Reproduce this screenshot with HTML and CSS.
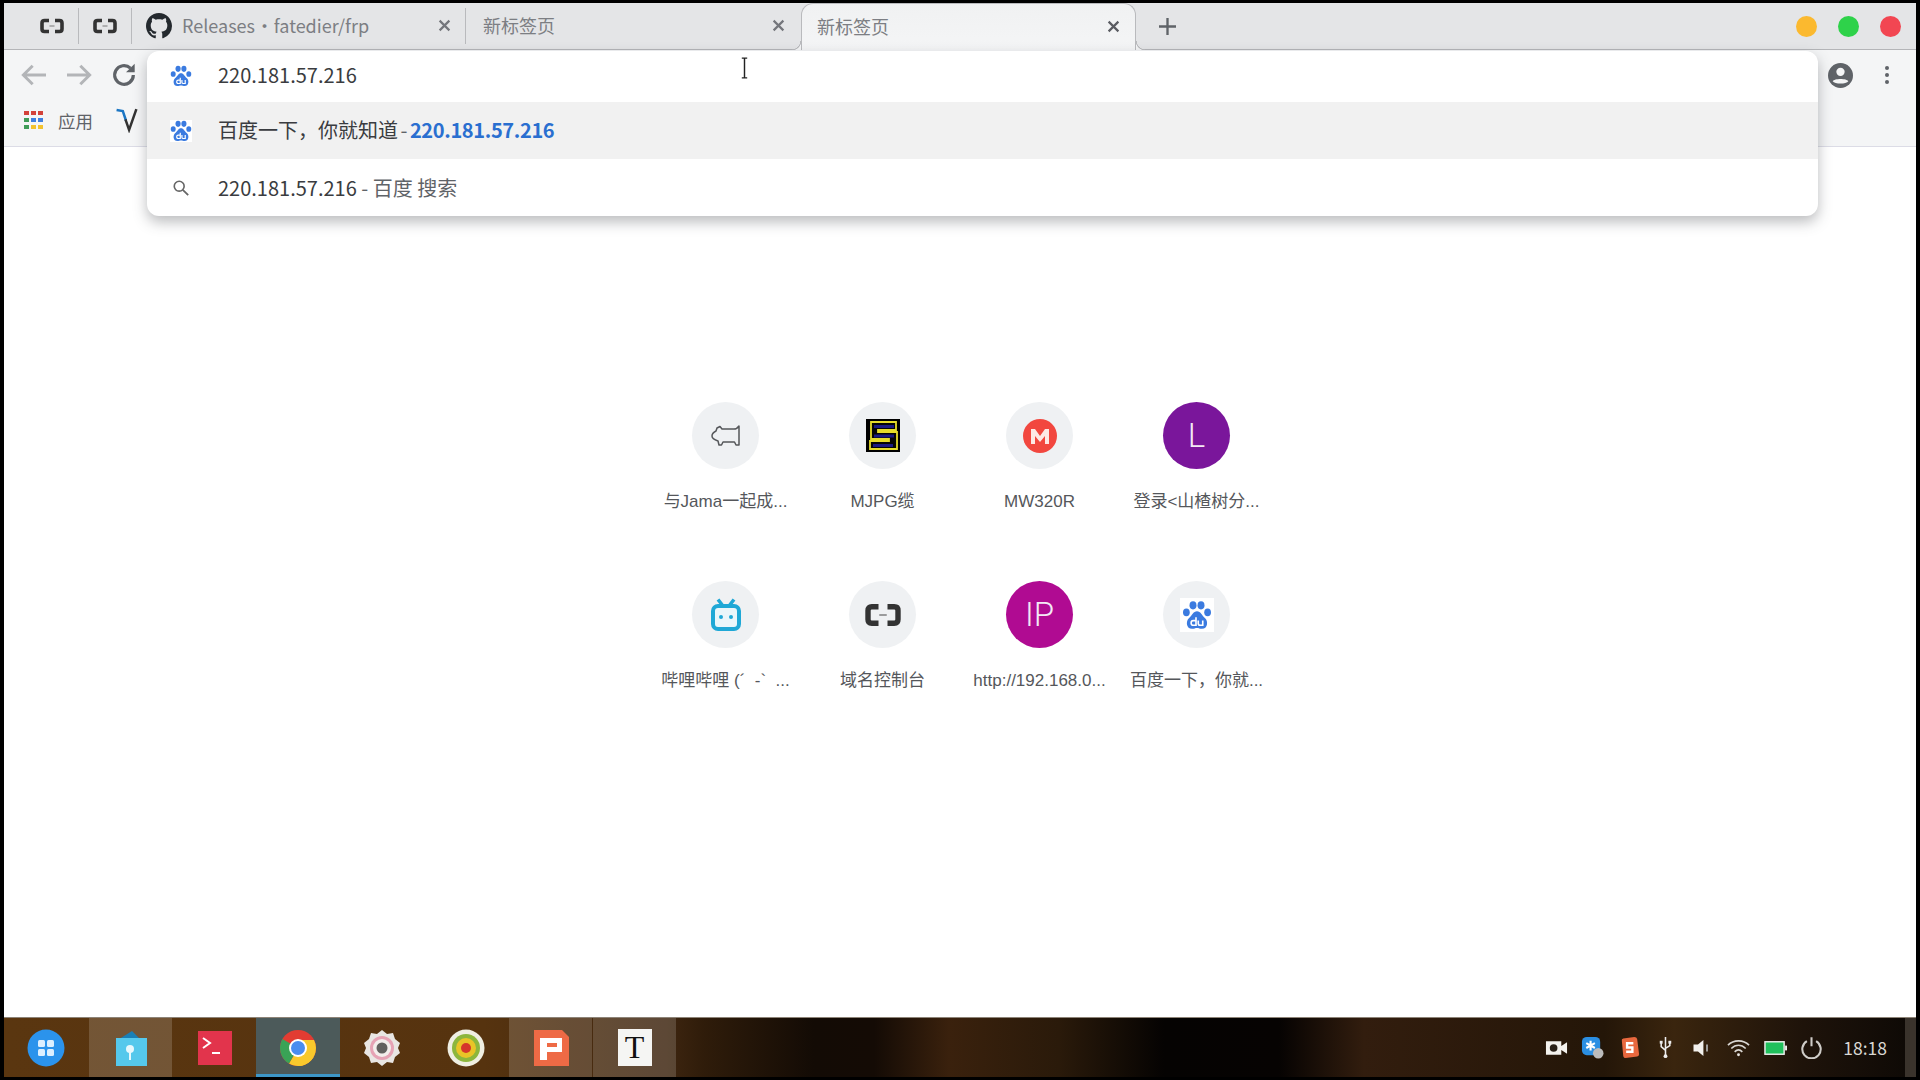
FILE: index.html
```html
<!DOCTYPE html>
<html lang="zh">
<head>
<meta charset="utf-8">
<title>新标签页</title>
<link rel="stylesheet" href="styles.css">
</head>
<body>
<svg class="defs" width="0" height="0">
  <symbol id="aliyun" viewBox="0 0 24 16">
    <path d="M9 2.500H4.500Q2 2.500 2 5V11Q2 13.500 4.500 13.500H9M15 2.500H19.500Q22 2.500 22 5V11Q22 13.500 19.500 13.500H15" fill="none" stroke="currentColor" stroke-width="3.600"/>
    <path d="M9.500 8H14.500" stroke="currentColor" stroke-width="1" opacity=".6"/>
  </symbol>
  <symbol id="baidu" viewBox="0 0 24 24">
    <ellipse cx="8.800" cy="4.200" rx="2.800" ry="3.300" fill="#3b7be0"/>
    <ellipse cx="15.200" cy="4.200" rx="2.800" ry="3.300" fill="#3b7be0"/>
    <ellipse cx="3.500" cy="9.800" rx="2.700" ry="3.100" fill="#3b7be0"/>
    <ellipse cx="20.500" cy="9.800" rx="2.700" ry="3.100" fill="#3b7be0"/>
    <path d="M12 9C9 9 8.500 12 5.500 14.500C2.800 17 3.500 23 8 23C10 23 10.500 22.400 12 22.400C13.500 22.400 14 23 16 23C20.500 23 21.200 17 18.500 14.500C15.500 12 15 9 12 9Z" fill="#3b7be0"/>
    <path d="M11.200 13.800V20.200H9Q7.300 20.200 7.300 18.300Q7.300 16.500 9 16.500H11.200M13 16.300V18.800Q13 20.200 14.500 20.200H16.600V16.300" fill="none" stroke="#fff" stroke-width="1.300"/>
  </symbol>
</svg>

<div class="screen">
  <header class="tabstrip">
    <div class="pinned"><svg class="ali-small"><use href="#aliyun"/></svg></div>
    <div class="pinned"><svg class="ali-small"><use href="#aliyun"/></svg></div>
    <div class="tab tab-gh">
      <svg class="gh" viewBox="0 0 16 16"><path fill="#24292e" d="M8 0C3.580 0 0 3.580 0 8c0 3.540 2.290 6.530 5.470 7.590.4.070.55-.17.55-.38 0-.19-.01-.82-.01-1.490-2.010.37-2.530-.49-2.690-.94-.09-.23-.48-.94-.82-1.130-.28-.15-.68-.52-.01-.53.63-.01 1.080.58 1.230.82.720 1.210 1.870.87 2.330.66.070-.52.280-.87.510-1.070-1.780-.2-3.640-.89-3.640-3.950 0-.87.310-1.590.820-2.150-.08-.2-.36-1.020.08-2.120 0 0 .67-.21 2.200.82.640-.18 1.320-.27 2-.27s1.360.09 2 .27c1.530-1.040 2.200-.82 2.200-.82.440 1.100.160 1.920.080 2.120.510.560.820 1.270.820 2.150 0 3.070-1.870 3.750-3.650 3.950.290.250.540.730.540 1.480 0 1.070-.010 1.930-.010 2.200 0 .210.150.460.550.380A8.013 8.013 0 0 0 16 8c0-4.420-3.580-8-8-8z"/></svg>
      <span class="tab-title">Releases · fatedier/frp</span>
      <svg class="tab-x" viewBox="0 0 12 12"><path d="M1.500 1.500L10.500 10.500M10.500 1.500L1.500 10.500" stroke="currentColor" stroke-width="2"/></svg>
    </div>
    <div class="tab tab-new">
      <span class="tab-title">新标签页</span>
      <svg class="tab-x" viewBox="0 0 12 12"><path d="M1.500 1.500L10.500 10.500M10.500 1.500L1.500 10.500" stroke="currentColor" stroke-width="2"/></svg>
    </div>
    <div class="tab tab-active">
      <span class="tab-title">新标签页</span>
      <svg class="tab-x" viewBox="0 0 12 12"><path d="M1.500 1.500L10.500 10.500M10.500 1.500L1.500 10.500" stroke="currentColor" stroke-width="2"/></svg>
    </div>
    <svg class="plus" viewBox="0 0 16 16"><path d="M8 0V16M0 8H16" stroke="#5f6368" stroke-width="2.200"/></svg>
    <div class="winctl">
      <span class="dot dot-y"></span>
      <span class="dot dot-g"></span>
      <span class="dot dot-r"></span>
    </div>
  </header>

  <section class="toolbar">
    <div class="navrow">
      <svg class="nav" viewBox="0 0 24 24"><path d="M21 12H4M11 5L4 12L11 19" fill="none" stroke="#b3b5b8" stroke-width="2.200"/></svg>
      <svg class="nav" viewBox="0 0 24 24"><path d="M3 12H20M13 5L20 12L13 19" fill="none" stroke="#b3b5b8" stroke-width="2.200"/></svg>
      <svg class="nav" viewBox="0 0 24 24"><path d="M19 12A7 7 0 1 1 16.800 6.900" fill="none" stroke="#5f6368" stroke-width="2.400"/><path d="M20 3.500V10H13.500Z" fill="#5f6368"/></svg>
      <div class="nav-spacer"></div>
      <svg class="avatar" viewBox="0 0 24 24"><circle cx="12" cy="12" r="12" fill="#5f6368"/><circle cx="12" cy="8.500" r="4" fill="#f4f5f6"/><path d="M4.500 17.500C6 14.500 18 14.500 19.500 17.500C17.500 20.500 6.500 20.500 4.500 17.500Z" fill="#f4f5f6"/></svg>
      <svg class="menu" viewBox="0 0 6 20"><circle cx="3" cy="3" r="2" fill="#5f6368"/><circle cx="3" cy="10" r="2" fill="#5f6368"/><circle cx="3" cy="17" r="2" fill="#5f6368"/></svg>
    </div>
    <div class="bookmarks">
      <svg class="apps" viewBox="0 0 20 20">
        <rect x="0" y="0" width="5" height="4" fill="#d3423a"/><rect x="7" y="0" width="5" height="4" fill="#d3423a"/><rect x="14" y="0" width="5" height="4" fill="#d3423a"/>
        <rect x="0" y="7" width="5" height="4" fill="#3f9c58"/><rect x="7" y="7" width="5" height="4" fill="#3f7fe0"/><rect x="14" y="7" width="5" height="4" fill="#3f7fe0"/>
        <rect x="0" y="14" width="5" height="4" fill="#3f9c58"/><rect x="7" y="14" width="5" height="4" fill="#f2c230"/><rect x="14" y="14" width="5" height="4" fill="#f2c230"/>
      </svg>
      <span class="bm-text">应用</span>
      <svg class="vlogo" viewBox="0 0 22 24"><path d="M1 2L7 3L10 12" fill="none" stroke="#1b76c4" stroke-width="2.400"/><path d="M9.500 11L13 21L20 1" fill="none" stroke="#333" stroke-width="2.400"/></svg>
    </div>
  </section>

  <main class="page">
    <div class="tiles">
      <div class="tile">
        <div class="tile-icon"><svg class="ic-pig" viewBox="0 0 32 23"><path d="M2 12C2 10 4 8 6 7L7 4L10 2.500L12 5H24Q27 5 29 2V21H26L24.500 18H13L11.500 21H9L8 17C5 16 2 14 2 12Z" fill="none" stroke="#55575a" stroke-width="1.500" stroke-linejoin="round"/></svg></div>
        <div class="tile-label">与Jama一起成...</div>
      </div>
      <div class="tile">
        <div class="tile-icon"><svg class="ic-mjpg" viewBox="0 0 34 33"><rect width="34" height="33" fill="#000"/><path d="M5 3H30V11H12V13H31V30H4V22H23V20H5Z" fill="#050505" stroke="#e6dc2a" stroke-width="1.800"/><g fill="#1a1a80"><rect x="8" y="6" width="20" height="3"/><rect x="8" y="15.500" width="20" height="3"/><rect x="7" y="25" width="20" height="3"/></g></svg></div>
        <div class="tile-label">MJPG缆</div>
      </div>
      <div class="tile">
        <div class="tile-icon"><svg class="ic-mw" viewBox="0 0 34 34"><circle cx="17" cy="17" r="17" fill="#f2473f"/><path d="M8 25V10H12L17 17L22 10H26V25H22V17L17 23L12 17V25Z" fill="#fde9e6"/></svg></div>
        <div class="tile-label">MW320R</div>
      </div>
      <div class="tile">
        <div class="tile-icon tile-letter tile-purple">L</div>
        <div class="tile-label">登录&lt;山楂树分...</div>
      </div>
      <div class="tile">
        <div class="tile-icon"><svg class="ic-bili" viewBox="0 0 32 34"><path d="M8 1.500L13 8M24 1.500L19 8" stroke="#1fa8d6" stroke-width="3.500"/><rect x="3" y="8" width="26" height="23" rx="5" fill="#eaf6fa" stroke="#1fa8d6" stroke-width="4"/><circle cx="11" cy="19" r="2" fill="#1fa8d6"/><circle cx="21" cy="19" r="2" fill="#1fa8d6"/></svg></div>
        <div class="tile-label">哔哩哔哩 (´ &nbsp;‐` &nbsp;...</div>
      </div>
      <div class="tile">
        <div class="tile-icon"><svg class="ic-ali"><use href="#aliyun"/></svg></div>
        <div class="tile-label">域名控制台</div>
      </div>
      <div class="tile">
        <div class="tile-icon tile-letter tile-magenta">IP</div>
        <div class="tile-label">http://192.168.0...</div>
      </div>
      <div class="tile">
        <div class="tile-icon"><span class="ic-baidu-bg"><svg class="ic-baidu"><use href="#baidu"/></svg></span></div>
        <div class="tile-label">百度一下，你就...</div>
      </div>
    </div>
  </main>

  <footer class="taskbar">
    <div class="slot">
      <svg class="tb-ic" viewBox="0 0 38 38"><circle cx="19" cy="19" r="18.500" fill="#2b93ec"/><g fill="#dcefff"><rect x="11" y="11" width="7" height="7" rx="1.500"/><rect x="20" y="11" width="7" height="7" rx="1.500"/><rect x="11" y="20" width="7" height="7" rx="1.500"/><rect x="20" y="20" width="7" height="7" rx="1.500"/></g></svg>
    </div>
    <div class="slot slot-hover">
      <svg class="tb-ic" viewBox="0 0 38 38"><path d="M4 12L20 2L30 12Z" fill="#1a7fb5"/><rect x="4" y="9" width="31" height="28" fill="#55c8ec"/><circle cx="18" cy="20" r="4" fill="#e7f8fd"/><path d="M18 20V31" stroke="#e7f8fd" stroke-width="2"/></svg>
    </div>
    <div class="slot">
      <svg class="tb-ic" viewBox="0 0 38 38"><rect x="3" y="2" width="34" height="34" fill="#e2344c"/><path d="M8 9L15 14L8 19" fill="none" stroke="#fff" stroke-width="2"/><path d="M17 24H25" stroke="#fff" stroke-width="2"/></svg>
    </div>
    <div class="slot slot-active">
      <svg class="tb-ic" viewBox="0 0 38 38"><circle cx="19" cy="19" r="18" fill="#e23c32"/><path d="M19 19L34.600 28A18 18 0 0 1 10 34.600Z" fill="#f9c92c"/><path d="M19 19L10 34.600A18 18 0 0 1 3.400 10Z" fill="#3aa356"/><path d="M19 19L19 37A18 18 0 0 0 37 19Q37 15 35 11H19Z" fill="#f9c92c"/><circle cx="19" cy="19" r="9" fill="#fff"/><circle cx="19" cy="19" r="7" fill="#4a8df0"/></svg>
    </div>
    <div class="slot">
      <svg class="tb-ic" viewBox="0 0 38 38"><path d="M19 1L24 5L30 4L32 10L37 14L35 19L37 24L32 28L30 34L24 33L19 37L14 33L8 34L6 28L1 24L3 19L1 14L6 10L8 4L14 5Z" fill="#e9e6e3"/><circle cx="19" cy="19" r="12" fill="#e6a3b5"/><circle cx="19" cy="19" r="9" fill="#f3eeec"/><circle cx="19" cy="19" r="5.500" fill="#62615f"/></svg>
    </div>
    <div class="slot">
      <svg class="tb-ic" viewBox="0 0 38 38"><circle cx="19" cy="19" r="18.500" fill="#efeee2"/><circle cx="19" cy="19" r="14" fill="#8cb63c"/><circle cx="19" cy="19" r="10" fill="#e9c427"/><circle cx="19" cy="19" r="5" fill="#d5372b"/></svg>
    </div>
    <div class="slot slot-hover">
      <svg class="tb-ic" viewBox="0 0 38 38"><path d="M2 1H30L37 8V37H2Z" fill="#ee6a45"/><path d="M8 9H30V23H15V31H8Z" fill="#fff"/><rect x="15" y="14" width="10" height="4" fill="#ee6a45"/></svg>
    </div>
    <div class="slot slot-hover">
      <div class="t-icon">T</div>
    </div>
    <div class="taskbar-spacer"></div>
    <div class="tray">
      <span class="tray-slot"><svg class="tray-ic" viewBox="0 0 24 16"><path d="M1 1H17V6L23 2V14L17 10V15H1Z" fill="#f4f2ee"/><circle cx="9" cy="8" r="4" fill="#2a2118"/></svg></span>
      <span class="tray-slot"><svg class="tray-ic tray-tall" viewBox="0 0 24 24"><rect x="1" y="1" width="19" height="19" rx="5" fill="#2b8fe3"/><path d="M10 5V15M5.500 7.500L14.500 12.500M14.500 7.500L5.500 12.500" stroke="#fff" stroke-width="2.200"/><circle cx="18" cy="18" r="5.500" fill="#bcbcbc"/></svg></span>
      <span class="tray-slot"><svg class="tray-ic tray-tall" viewBox="0 0 24 24"><path d="M4 5Q3.500 3 5.500 2.500L17 1Q19.500 1 20 3L22 19Q22 21 20 21.500L8 23Q6 23 5.500 21Z" fill="#e8683e"/><path d="M16 7.500H9.500V12H15V16.500H8.500" fill="none" stroke="#fff" stroke-width="2.500"/></svg></span>
      <span class="tray-slot"><svg class="tray-ic tray-tall" viewBox="0 0 14 24"><path d="M7 1V22M7 15L2.500 11V7M7 13L11.500 10V7" fill="none" stroke="#eee" stroke-width="1.600"/><circle cx="7" cy="21" r="2" fill="#eee"/><rect x="1" y="5" width="3" height="3" fill="#eee"/><rect x="10" y="5" width="3" height="3" fill="#eee"/></svg></span>
      <span class="tray-slot"><svg class="tray-ic" viewBox="0 0 24 20"><path d="M2 6H7L13 1V19L7 14H2Z" fill="#f2f0ec"/><path d="M17 6V14" stroke="#aaa" stroke-width="2"/></svg></span>
      <span class="tray-slot"><svg class="tray-ic" viewBox="0 0 24 18"><path d="M1 6C7 0 17 0 23 6M4.500 9.500C9 5 15 5 19.500 9.500M8 13C10.500 10.500 13.500 10.500 16 13" fill="none" stroke="#d9d6d2" stroke-width="1.700"/><circle cx="12" cy="16" r="1.500" fill="#e9e6e2"/></svg></span>
      <span class="tray-slot"><svg class="tray-ic" viewBox="0 0 24 15"><rect x="1" y="1" width="20" height="13" fill="#20c05c" stroke="#eee" stroke-width="1.500"/><rect x="22" y="5" width="2" height="5" fill="#eee"/></svg></span>
      <span class="tray-slot"><svg class="tray-ic tray-tall" viewBox="0 0 20 20"><path d="M6 4.500A8 8 0 1 0 14 4.500M10 1V9" fill="none" stroke="#cfccc8" stroke-width="1.800"/></svg></span>
      <span class="clock">18:18</span>
    </div>
    <div class="tray-end"></div>
  </footer>

  <div class="omnibox">
    <div class="omni-row omni-input">
      <svg class="omni-ic"><use href="#baidu"/></svg>
      <span class="omni-text">220.181.57.216</span>
    </div>
    <div class="omni-row omni-sel">
      <svg class="omni-ic omni-ic-box"><use href="#baidu"/></svg>
      <span class="omni-text omni-tight">百度一下，你就知道 <span class="omni-dim">-</span> <span class="omni-url">220.181.57.216</span></span>
    </div>
    <div class="omni-row omni-last">
      <svg class="omni-ic omni-search" viewBox="0 0 20 20"><circle cx="8" cy="8" r="5.500" fill="none" stroke="#666" stroke-width="1.800"/><path d="M12 12L18 18" stroke="#666" stroke-width="2"/></svg>
      <span class="omni-text omni-low">220.181.57.216 <span class="omni-dim">- 百度 搜索</span></span>
    </div>
  </div>

  <svg class="ibeam" viewBox="0 0 10 24"><path d="M2 1H8M5 1V23M2 23H8" fill="none" stroke="#222" stroke-width="1.600"/></svg>
</div>
</body>
</html>
```
FILE: styles.css
```css
* { box-sizing: border-box; }
html, body { margin: 0; height: 100%; background: #000; overflow: hidden; }
body { padding: 3px 4px 3px 4px; font-family: "Noto Sans CJK SC", "Noto Sans", sans-serif; }
.defs { position: absolute; }

.screen { position: relative; height: 100%; display: flex; flex-direction: column; background: #fff; }

.tabstrip { height: 47px; flex: none; display: flex; align-items: center; background: #e4e5e7; border-bottom: 1px solid #b4b5b8; position: relative; }
.pinned { width: 53px; height: 36px; display: flex; align-items: center; justify-content: center; border-right: 1px solid #b9babd; color: #333; }
.pinned:first-child { width: 75px; padding-left: 21px; }
.ali-small { width: 24px; height: 16px; }
.tab { height: 36px; display: flex; align-items: center; position: relative; font-size: 18px; color: #7c7e83; }
.tab-gh { width: 334px; padding-left: 14px; border-right: 1px solid #b9babd; }
.tab-gh .tab-title { word-spacing: -3.600px; }
.gh { width: 26px; height: 26px; margin-right: 10px; flex: none; }
.tab-title { white-space: nowrap; position: relative; top: -1px; }
.tab-x { position: absolute; right: 14px; top: 50%; width: 13px; height: 13px; margin-top: -7px; color: #74767c; }
.tab-new { width: 335px; padding-left: 17px; }
.tab-new .tab-x { right: 16px; }
.tab-active { width: 335px; height: 47px; padding-left: 15px; background: linear-gradient(#f0f1f2, #f4f5f6); border: 1px solid #b9babd; border-bottom: 0; border-radius: 12px 12px 0 0; align-self: flex-start; z-index: 1; }
.tab-active::before, .tab-active::after { content: ""; position: absolute; bottom: 0; width: 9px; height: 9px; }
.tab-active::before { left: -10px; background: radial-gradient(circle at 0 0, transparent 8px, #b9babd 8.500px, #b9babd 9px, #f4f5f6 9.500px); }
.tab-active::after { right: -10px; background: radial-gradient(circle at 100% 0, transparent 8px, #b9babd 8.500px, #b9babd 9px, #f4f5f6 9.500px); }
.tab-active .tab-x { right: 15px; color: #5a5c62; }
.plus { width: 17px; height: 17px; margin-left: 23px; flex: none; }
.winctl { margin-left: auto; display: flex; gap: 21px; padding-right: 15px; }
.dot { width: 21px; height: 21px; border-radius: 50%; }
.dot-y { background: #fbb92f; }
.dot-g { background: #2ed24a; }
.dot-r { background: #f24652; }

.toolbar { height: 97px; flex: none; background: #f4f5f6; border-bottom: 1px solid #dcdce6; display: flex; flex-direction: column; }
.navrow { height: 50px; display: flex; align-items: center; padding-left: 14px; padding-right: 26px; gap: 13px; }
.nav { width: 32px; height: 32px; flex: none; }
.nav-spacer { flex: 1; }
.avatar { width: 25px; height: 25px; flex: none; }
.menu { width: 6px; height: 20px; flex: none; margin-left: 18px; }
.bookmarks { flex: 1; display: flex; align-items: center; padding-left: 20px; padding-bottom: 5px; }
.apps { width: 20px; height: 20px; flex: none; }
.bm-text { font-size: 17.500px; color: #5f6368; margin-left: 14px; }
.vlogo { width: 24px; height: 25px; margin-left: 22px; flex: none; }

.page { flex: 1; min-height: 0; display: flex; justify-content: center; padding: 255px 0 0 2px; }
.tiles { display: grid; grid-template-columns: repeat(4, 157px); grid-auto-rows: 179px; }
.tile { display: flex; flex-direction: column; align-items: center; }
.tile-icon { width: 67px; height: 67px; flex: none; border-radius: 50%; background: #eff1f3; display: flex; align-items: center; justify-content: center; }
.tile-label { margin-top: 21px; font-family: "Liberation Sans", "Noto Sans CJK SC", sans-serif; font-size: 17px; line-height: 24px; color: #55575b; white-space: nowrap; }
.tile-letter { color: #f3e9f5; font-family: "Roboto", sans-serif; font-weight: 300; font-size: 33px; }
.tile-purple { background: #7a169b; }
.tile-magenta { background: #b00b92; }
.ic-pig { width: 32px; height: 23px; }
.ic-mjpg { width: 34px; height: 33px; }
.ic-mw { width: 34px; height: 34px; }
.ic-bili { width: 32px; height: 34px; }
.ic-ali { width: 36px; height: 24px; color: #333; }
.ic-baidu-bg { width: 34px; height: 34px; background: #fff; display: flex; align-items: center; justify-content: center; }
.ic-baidu { width: 30px; height: 30px; }

.taskbar { height: 60px; flex: none; display: flex; align-items: stretch; border-top: 1px solid #8d8377; background: linear-gradient(90deg, #5a3610 0, #56330f 480px, #3f2610 660px, #2f1c0a 700px, #130b05 810px, #140b05 870px, #3a210d 945px, #2a1a0a 1055px, #050302 1160px, #060302 1275px, #321d0e 1360px, #241608 1600px, #3a250e 1670px, #1e130a 1800px, #0f0a06 1900px); }
.slot { width: 84px; flex: none; display: flex; align-items: center; justify-content: center; }
.slot-hover { background: rgba(255,255,255,.16); margin-left: 1px; width: 83px; }
.slot-active { background: #4c5a5a; border-bottom: 3px solid #3d97c8; }
.tb-ic { width: 38px; height: 38px; }
.slot-active .tb-ic { margin-top: 3px; }
.t-icon { width: 34px; height: 37px; background: #f5f5f3; color: #111; font-family: "Liberation Serif", serif; font-size: 32px; line-height: 37px; text-align: center; }
.taskbar-spacer { flex: 1; }
.tray { display: flex; align-items: center; padding-right: 18px; }
.tray-slot { width: 36.500px; display: flex; justify-content: center; align-items: center; }
.tray-ic { width: 23px; height: 18px; }
.tray-tall { height: 23px; }
.clock { margin-left: 13.500px; font-size: 17.500px; color: #d9d7d3; }
.tray-end { width: 11px; background: #3a332c; flex: none; }

.omnibox { position: absolute; left: 143px; top: 48px; width: 1671px; height: 165px; background: #fff; border-radius: 12px; box-shadow: 0 6px 14px rgba(60,64,70,.35); display: flex; flex-direction: column; overflow: hidden; font-size: 20px; color: #3a3c40; z-index: 2; }
.omni-row { display: flex; align-items: center; padding-left: 23px; }
.omni-input { height: 51px; padding-bottom: 2px; }
.omni-sel { height: 57px; background: #f1f1f1; }
.omni-last { height: 57px; }
.omni-ic { width: 22px; height: 22px; flex: none; margin-right: 26px; }
.omni-ic-box { background: #fff; }
.omni-search { width: 18px; height: 18px; margin-left: 2px; margin-right: 28px; }
.omni-text { white-space: nowrap; position: relative; top: -1px; }
.omni-tight { word-spacing: -2px; }
.omni-low { top: 0; }
.omni-dim { color: #5f6368; }
.omni-url { color: #2a6fd0; font-weight: 700; letter-spacing: -.35px; }
.ibeam { position: absolute; left: 736px; top: 53px; width: 9px; height: 24px; z-index: 3; }
```
